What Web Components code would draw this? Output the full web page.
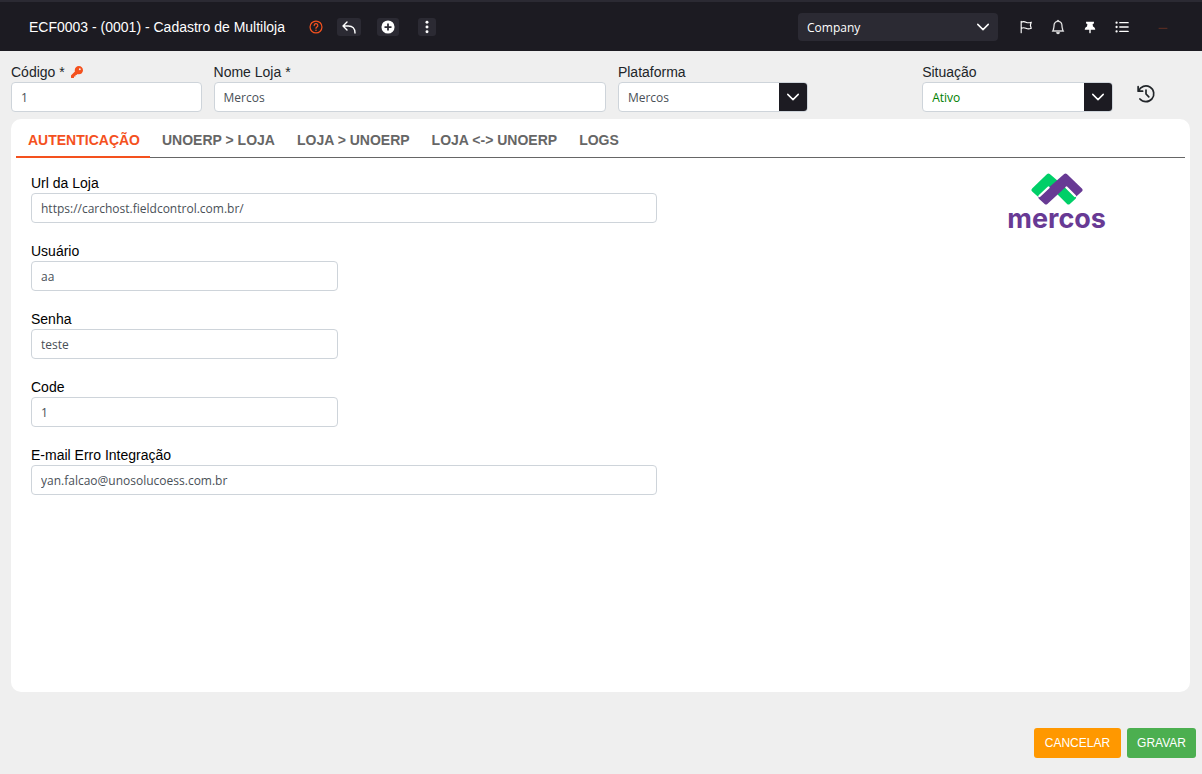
<!DOCTYPE html>
<html lang="pt-BR">
<head>
<meta charset="utf-8">
<title>Cadastro de Multiloja</title>
<style>
body { margin: 0; background: #efefef; font-family: "Liberation Sans", Arial, sans-serif; }
</style>
</head>
<body>
<store-page></store-page>
<script>
const define = (name, html, setup) => {
  const tpl = document.createElement('template');
  tpl.innerHTML = html;
  customElements.define(name, class extends HTMLElement {
    connectedCallback() {
      if (this.shadowRoot) return;
      this.attachShadow({ mode: 'open' }).append(tpl.content.cloneNode(true));
      if (setup) setup(this, this.shadowRoot);
    }
  });
};

const stroke = 'fill="none" stroke="currentColor" stroke-linecap="round" stroke-linejoin="round"';
const ICONS = {
  help: `<g ${stroke} stroke-width="1.4"><circle cx="8" cy="8" r="6.800"/><path d="M5.9 6.3a2.1 2.1 0 1 1 3 1.9c-.6.3-.9.7-.9 1.3"/></g><circle cx="8" cy="11.7" r=".9" fill="currentColor"/>`,
  back: `<path ${stroke} stroke-width="1.400" d="M6 3 2 7l4 4M2 7h5.500c4 0 6.500 2.500 6.500 7"/>`,
  plus: `<circle cx="8" cy="8" r="7.500" fill="currentColor"/><path d="M8 4v8M4 8h8" stroke="#2b2a33" stroke-width="2"/>`,
  dots: `<g fill="currentColor"><circle cx="8" cy="2.500" r="1.700"/><circle cx="8" cy="8" r="1.700"/><circle cx="8" cy="13.500" r="1.700"/></g>`,
  chevron: `<path ${stroke} stroke-width="1.700" d="m2 5 6 6 6-6"/>`,
  flag: `<path ${stroke} stroke-width="1.300" d="M2.500 14.500V1.500M2.500 2.500c2-1 3.500-1 5.500 0s3.500 1 6 0l-1 3.500 1 3.500c-2.500 1-4 1-6 0s-3.500-1-5.500 0"/>`,
  bell: `<path fill="currentColor" stroke="currentColor" stroke-width=".3" d="M8 16a2 2 0 0 0 2-2H6a2 2 0 0 0 2 2M8 1.918l-.797.161A4 4 0 0 0 4 6c0 .628-.134 2.197-.459 3.742-.16.767-.376 1.566-.663 2.258h10.244c-.287-.692-.502-1.490-.663-2.258C12.134 8.197 12 6.628 12 6a4 4 0 0 0-3.203-3.920zM14.220 12c.223.447.481.801.780 1H1c.299-.199.557-.553.780-1C2.680 10.200 3 6.880 3 6c0-2.420 1.720-4.440 4.005-4.901a1 1 0 1 1 1.990 0A5 5 0 0 1 13 6c0 .880.320 4.200 1.220 6"/>`,
  pin: `<path fill="currentColor" d="M3.500 2h9v2l-1.500.7.4 2.800c1.600.8 2.600 2 2.600 3.500H8.800v3.500L8 15.500l-.8-1V11H2c0-1.500 1-2.700 2.600-3.500L5 4.700 3.500 4z"/>`,
  list: `<g ${stroke} stroke-width="1.600"><path d="M5.500 3H15M5.500 8H15M5.500 13H15"/></g><g fill="currentColor"><circle cx="1.800" cy="3" r="1.300"/><circle cx="1.800" cy="8" r="1.300"/><circle cx="1.800" cy="13" r="1.300"/></g>`,
  dash: `<path d="M3 9.500h10" stroke="currentColor"/>`,
  key: `<path transform="scale(.03125)" fill="currentColor" d="M336 352c97.200 0 176-78.800 176-176S433.200 0 336 0S160 78.800 160 176c0 18.700 2.900 36.800 8.300 53.700L7 391c-4.500 4.500-7 10.600-7 17v80c0 13.300 10.700 24 24 24h80c13.300 0 24-10.700 24-24V448h40c13.300 0 24-10.700 24-24V384h40c6.400 0 12.500-2.500 17-7l33.300-33.300c16.900 5.400 35 8.300 53.700 8.300zM376 96a40 40 0 1 1 0 80 40 40 0 1 1 0-80z"/>`,
  history: `<g ${stroke} stroke-width="1.500"><path d="M1 1.500v4h4M1.400 5.300A7 7 0 1 1 2.600 12.400"/><path d="M8 4.500V8l2.500 2.600"/></g>`
};

define('app-icon', `<style>
:host { display: inline-flex; width: var(--size, 14px); height: var(--size, 14px); }
svg { width: 100%; height: 100%; overflow: visible; }
</style>`, (host, root) => {
  root.innerHTML += `<svg viewBox="0 0 16 16" aria-hidden="true">${ICONS[host.getAttribute('name')]}</svg>`;
});

define('icon-button', `<style>
:host { display: inline-flex; }
button { display: flex; align-items: center; justify-content: center; border: 0; margin: 0; padding: var(--pad, 0); height: var(--h, 18px); border-radius: 3px; background: var(--bg, none); color: inherit; cursor: pointer; }
</style><button type="button"><slot></slot></button>`, (host, root) => {
  root.querySelector('button').setAttribute('aria-label', host.getAttribute('label'));
});

define('app-header', `<style>
:host { display: flex; align-items: center; box-sizing: border-box; height: 51px; padding: 1px 32px 0 29px; background: #1c1b22; border-top: 2px solid #2b2a33; color: #fff; }
h1 { margin: 0 24px 0 0; font-size: 14px; line-height: 20px; font-weight: 400; white-space: nowrap; }
.tools { display: flex; align-items: center; gap: 16px; }
.tools > * { --bg: #2b2a33; --pad: 0 4px; }
.tools > .help { --bg: none; --pad: 0; color: #f4511e; margin-right: -2px; }
.tools > .more { --pad: 0 2px; margin-left: 3px; }
.company { margin-left: auto; display: grid; align-items: center; width: 200px; }
select { grid-area: 1/1; appearance: none; height: 28px; width: 100%; border: 0; border-radius: 4px; padding: 0 9px; background: #2b2a33; color: #fff; font: 12px "Open Sans", sans-serif; }
.company app-icon { grid-area: 1/1; justify-self: end; margin-right: 8px; pointer-events: none; }
nav { display: flex; align-items: center; gap: 18px; margin-left: 21px; }
nav .minimize { color: #6b3423; margin-left: 9px; }
</style>
<h1>ECF0003 - (0001) - Cadastro de Multiloja</h1>
<div class="tools">
<icon-button class="help" label="Ajuda"><app-icon name="help"></app-icon></icon-button>
<icon-button label="Voltar"><app-icon name="back" style="--size:16px"></app-icon></icon-button>
<icon-button label="Novo"><app-icon name="plus"></app-icon></icon-button>
<icon-button class="more" label="Mais opções"><app-icon name="dots"></app-icon></icon-button>
</div>
<div class="company"><select aria-label="Empresa"><option>Company</option></select><app-icon name="chevron"></app-icon></div>
<nav>
<icon-button label="Sinalizar"><app-icon name="flag"></app-icon></icon-button>
<icon-button label="Notificações"><app-icon name="bell"></app-icon></icon-button>
<icon-button label="Fixar"><app-icon name="pin"></app-icon></icon-button>
<icon-button label="Lista"><app-icon name="list"></app-icon></icon-button>
<icon-button class="minimize" label="Minimizar"><app-icon name="dash"></app-icon></icon-button>
</nav>`);

define('text-field', `<style>
:host { display: block; min-width: 0; }
.cap { display: flex; align-items: center; gap: 6px; height: 20px; }
label { font-size: 14px; line-height: 20px; white-space: nowrap; }
input { display: block; box-sizing: border-box; width: 100%; height: 30px; border: 1px solid #ced4da; border-radius: 4px; padding: 1px 9px 0; background: #fff; color: #495057; font: 12px "Open Sans", sans-serif; }
</style><div class="cap"><label for="f"></label><slot></slot></div><input id="f" type="text">`, (host, root) => {
  root.querySelector('label').textContent = host.getAttribute('label');
  root.querySelector('input').value = host.getAttribute('value');
});

define('select-field', `<style>
:host { display: block; min-width: 0; }
label { display: block; font-size: 14px; line-height: 20px; }
.box { display: grid; box-sizing: border-box; height: 30px; border: 1px solid #ced4da; border-radius: 4px; overflow: hidden; background: #fff; }
select { grid-area: 1/1; appearance: none; width: 100%; border: 0; padding: 1px 9px 0; background: none; color: var(--value, #495057); font: 12px "Open Sans", sans-serif; }
.arrow { grid-area: 1/1; justify-self: end; display: flex; align-items: center; justify-content: center; width: 28px; background: #1c1b22; color: #fff; pointer-events: none; }
</style><label for="f"></label><div class="box"><select id="f"><option></option></select><span class="arrow"><app-icon name="chevron"></app-icon></span></div>`, (host, root) => {
  root.querySelector('label').textContent = host.getAttribute('label');
  root.querySelector('option').textContent = host.getAttribute('value');
});

define('store-summary', `<style>
:host { display: grid; grid-template-columns: 17fr 35fr 17fr 8fr 17fr 6fr; column-gap: 12px; padding: 11px 10px 7px 11px; color: #212529; }
.key { --size: 12px; color: #f4511e; }
.state { grid-column: 5; --value: #008000; }
.history { --size: 18px; align-self: end; margin: 0 0 9px 12px; }
</style>
<text-field label="Código *" value="1"><app-icon class="key" name="key"></app-icon></text-field>
<text-field label="Nome Loja *" value="Mercos"></text-field>
<select-field label="Plataforma" value="Mercos"></select-field>
<select-field class="state" label="Situação" value="Ativo"></select-field>
<icon-button class="history" label="Histórico"><app-icon name="history"></app-icon></icon-button>`);

define('tab-bar', `<style>
:host { display: block; }
div { display: flex; border-bottom: 1px solid #666; }
button { border: 0; border-bottom: 2px solid transparent; margin: 0 0 -1px; padding: 4px 10px 0 12px; height: 39px; background: none; color: #666; font: bold 14px "Liberation Sans", Arial, sans-serif; cursor: pointer; }
button[aria-selected=true] { color: #f4511e; border-color: #f4511e; }
</style><div role="tablist">
<button type="button" role="tab" aria-selected="true">AUTENTICAÇÃO</button>
<button type="button" role="tab">UNOERP &gt; LOJA</button>
<button type="button" role="tab">LOJA &gt; UNOERP</button>
<button type="button" role="tab">LOJA &lt;-&gt; UNOERP</button>
<button type="button" role="tab">LOGS</button></div>`);

define('mercos-logo', `<style>
:host { display: flex; flex-direction: column; align-items: center; color: #683a94; }
svg { width: 52px; height: 32px; }
span { font: bold 27px/28px Inter, sans-serif; }
</style><svg viewBox="0 0 52 32" aria-hidden="true">
<g stroke-width="4" stroke-linejoin="round">
<path fill="#00cf68" stroke="#00cf68" d="M2.500 17 17.500 2.500 43 24.500 37.500 29.500 20 12 7.500 21.500z"/>
<path fill="#683a94" stroke="#683a94" d="M34.500 2.500 49.500 17 44.500 21.500 34.500 11.500 15 29.500 9.500 24.500z"/>
</g>
<path fill="none" stroke="#fff" stroke-width="2.400" stroke-linecap="round" d="m8.500 23 9-8.500M35.500 14.500l8.500 8.500"/>
</svg><span>mercos</span>`);

define('auth-card', `<style>
:host { display: block; flex: 1; margin: 0 12px 0 11px; padding: 0 5px; background: #fff; border-radius: 10px; color: #000; }
.body { display: flex; justify-content: space-between; align-items: flex-start; padding: 15px; }
form { display: grid; grid-template-columns: 1fr 1fr; gap: 18px 12px; width: 55%; }
text-field { grid-column: 1; }
.wide { grid-column: 1 / -1; }
mercos-logo { margin-right: 64px; }
</style><tab-bar></tab-bar><div class="body"><form>
<text-field class="wide" label="Url da Loja" value="https://carchost.fieldcontrol.com.br/"></text-field>
<text-field label="Usuário" value="aa"></text-field>
<text-field label="Senha" value="teste"></text-field>
<text-field label="Code" value="1"></text-field>
<text-field class="wide" label="E-mail Erro Integração" value="yan.falcao@unosolucoess.com.br"></text-field>
</form><mercos-logo></mercos-logo></div>`);

define('form-actions', `<style>
:host { display: flex; justify-content: flex-end; gap: 6px; padding: 36px 6px 16px; }
button { height: 30px; border: 0; border-radius: 3px; margin: 0; padding: 0 11px; color: #fff; font: 12px "Liberation Sans", Arial, sans-serif; cursor: pointer; }
.cancel { background: #ff9800; }
.save { background: #4caf50; padding: 0 10px; }
</style><button class="cancel" type="button">CANCELAR</button><button class="save" type="button">GRAVAR</button>`);

define('store-page', `<style>
:host { display: flex; flex-direction: column; min-height: 100vh; }
</style><app-header></app-header><store-summary></store-summary><auth-card></auth-card><form-actions></form-actions>`);
</script>
</body>
</html>
